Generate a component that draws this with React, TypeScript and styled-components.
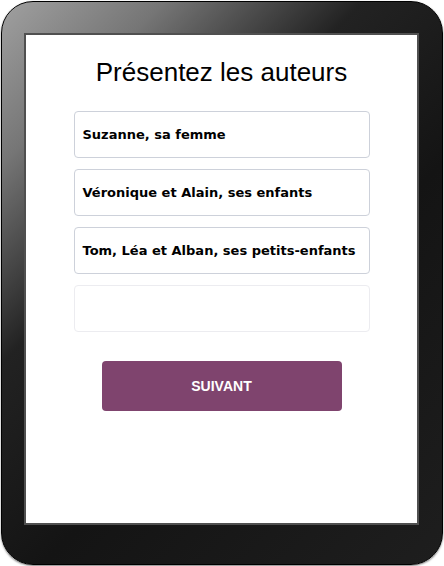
import React from "react";
import styled, { createGlobalStyle } from "styled-components";

const GlobalStyle = createGlobalStyle`
  html, body {
    margin: 0;
    padding: 0;
    background: #ffffff;
  }
`;

const authors = [
  "Suzanne, sa femme",
  "Véronique et Alain, ses enfants",
  "Tom, Léa et Alban, ses petits-enfants",
  "",
];

export default function App() {
  return (
    <>
      <GlobalStyle />
      <Tablet>
        <Screen>
          <Title>Présentez les auteurs</Title>
          <Fields>
            {authors.map((name, i) => (
              <Field key={i} $empty={name === ""}>
                {name}
              </Field>
            ))}
          </Fields>
          <NextButton>SUIVANT</NextButton>
        </Screen>
      </Tablet>
    </>
  );
}

const Tablet = styled.div`
  box-sizing: border-box;
  margin: 1px;
  width: 442px;
  height: 564px;
  border-radius: 32px;
  border: 1px solid #000;
  background: linear-gradient(135deg, #a0a0a0 0%, #767676 16%, #222 36%, #141414 60%, #1e1e1e 100%);
  box-shadow: 0 1px 2px rgba(0, 0, 0, 0.5);
  padding: 31px 23px 39px 22px;
  display: flex;
`;

const Screen = styled.div`
  flex: 1;
  background: #fff;
  border: 2px solid #505050;
  display: flex;
  flex-direction: column;
  align-items: center;
`;

const Title = styled.h1`
  margin: 23px 0 0;
  font-family: "Liberation Sans", Arial, sans-serif;
  font-weight: normal;
  font-size: 26px;
  line-height: 29px;
  color: #000;
`;

const Fields = styled.div`
  margin-top: 24px;
  display: flex;
  flex-direction: column;
  gap: 11px;
  width: 296px;
`;

const Field = styled.div<{ $empty?: boolean }>`
  box-sizing: border-box;
  height: 47px;
  padding: 0 8px;
  display: flex;
  align-items: center;
  border: 1px solid ${(p) => (p.$empty ? "#ececf0" : "#cdd1da")};
  border-radius: 4px;
  font-family: "DejaVu Sans", Verdana, sans-serif;
  font-weight: bold;
  font-size: 13px;
  color: #000;
  white-space: nowrap;
`;

const NextButton = styled.button`
  margin-top: 29px;
  width: 240px;
  height: 50px;
  border: none;
  border-radius: 4px;
  background: #7f446e;
  color: #fff;
  font-family: "Liberation Sans", Arial, sans-serif;
  font-weight: bold;
  font-size: 14px;
  cursor: pointer;
`;
